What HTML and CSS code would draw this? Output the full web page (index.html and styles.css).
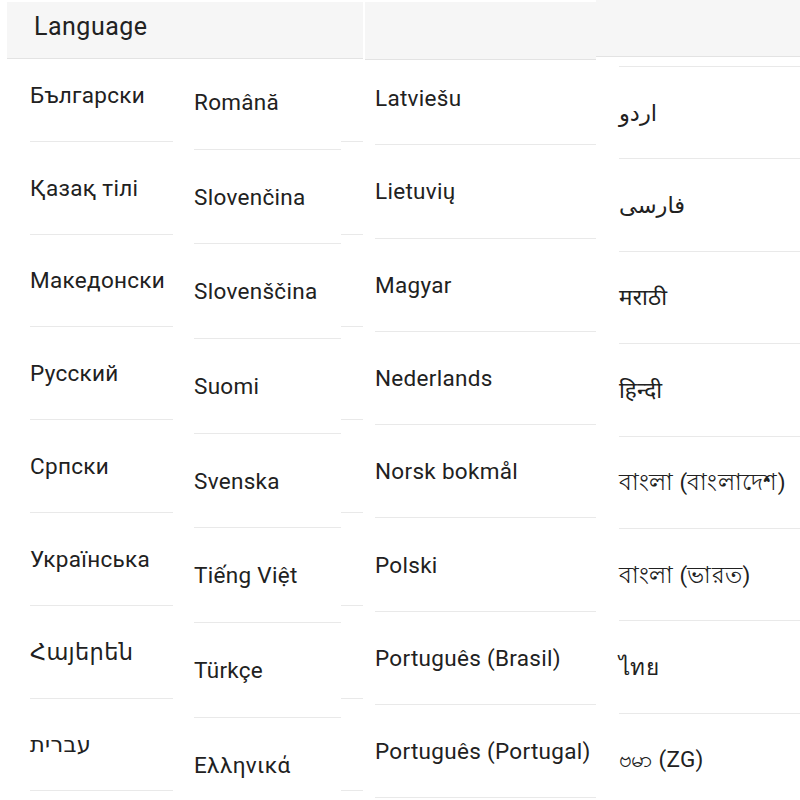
FILE: index.html
```html
<!DOCTYPE html>
<html lang="en">
<head>
<meta charset="utf-8">
<title>Language</title>
<link rel="stylesheet" href="styles.css">
</head>
<body>
<div class="screen">
  <section class="strip strip-a">
    <header class="bar bar-a"><h1 class="title">Language</h1></header>
    <div class="lists">
      <ul class="list list-1">
        <li class="row">Български</li>
        <li class="row">Қазақ тілі</li>
        <li class="row">Македонски</li>
        <li class="row">Русский</li>
        <li class="row">Српски</li>
        <li class="row">Українська</li>
        <li class="row">Հայերեն</li>
        <li class="row">עברית</li>
        <li class="row"></li>
      </ul>
      <ul class="list list-2">
        <li class="row">Română</li>
        <li class="row">Slovenčina</li>
        <li class="row">Slovenščina</li>
        <li class="row">Suomi</li>
        <li class="row">Svenska</li>
        <li class="row">Tiếng Việt</li>
        <li class="row">Türkçe</li>
        <li class="row">Ελληνικά</li>
      </ul>
      <ul class="list list-stub">
        <li class="row"></li>
        <li class="row"></li>
        <li class="row"></li>
        <li class="row"></li>
        <li class="row"></li>
        <li class="row"></li>
        <li class="row"></li>
        <li class="row"></li>
        <li class="row"></li>
      </ul>
    </div>
  </section>
  <section class="strip strip-c">
    <header class="bar bar-c"></header>
    <ul class="list list-3">
      <li class="row">Latviešu</li>
      <li class="row">Lietuvių</li>
      <li class="row">Magyar</li>
      <li class="row">Nederlands</li>
      <li class="row">Norsk bokmål</li>
      <li class="row">Polski</li>
      <li class="row">Português (Brasil)</li>
      <li class="row">Português (Portugal)</li>
      <li class="row"></li>
    </ul>
  </section>
  <section class="strip strip-d">
    <header class="bar bar-d"></header>
    <ul class="list list-4">
      <li class="row">اردو</li>
      <li class="row">فارسی</li>
      <li class="row">मराठी</li>
      <li class="row">हिन्दी</li>
      <li class="row">বাংলা (বাংলাদেশ)</li>
      <li class="row">বাংলা (ভারত)</li>
      <li class="row">ไทย</li>
      <li class="row">ဗမာ (ZG)</li>
    </ul>
  </section>
</div>
</body>
</html>
```
FILE: styles.css
```css
* { box-sizing: border-box; }
html, body {
  margin: 0;
  padding: 0;
  background: #ffffff;
}
body {
  width: 800px;
  height: 800px;
  overflow: hidden;
  font-family: Roboto, "Noto Sans", "DejaVu Sans", sans-serif;
  color: #212121;
}
.screen {
  display: flex;
  align-items: flex-start;
  width: 800px;
  height: 800px;
}
.strip {
  display: flex;
  flex-direction: column;
  flex: none;
}
.strip-a { width: 363px; padding-left: 7px; margin-right: 2px; }
.strip-c { width: 231px; }
.strip-d { width: 204px; }

.bar {
  position: relative;
  z-index: 1;
  background: #f6f6f6;
  border-bottom: 1px solid #e3e3e3;
  flex: none;
}
.bar-a { margin-top: 2px; height: 57px; }
.bar-c { margin-top: 2px; height: 58px; }
.bar-d { margin-top: 0; height: 57px; }

.title {
  margin: 0;
  padding-left: 27px;
  font-size: 25px;
  font-weight: 400;
  letter-spacing: 0.5px;
  line-height: 50px;
  color: #222222;
}

.lists {
  display: flex;
  align-items: flex-start;
}
.list {
  list-style: none;
  margin: 0;
  padding: 0;
  flex: none;
}
.row {
  display: flex;
  align-items: center;
  border-bottom: 1px solid #e9e9e9;
  font-size: 22.5px;
  letter-spacing: 0.3px;
  line-height: 30px;
  white-space: nowrap;
}

.list-1 { width: 143px; margin-left: 23px; margin-top: -10px; }
.list-1 .row { height: 92.8px; }

.list-2 { width: 168px; padding-left: 21px; margin-top: -4px; }
.list-2 .row { height: 94.7px; }

.list-stub { width: 22px; margin-top: -10px; }
.list-stub .row { height: 92.8px; }

.list-3 { margin-left: 10px; width: 221px; margin-top: -8px; }
.list-3 .row { height: 93.3px; }

.list-4 { margin-left: 23px; width: 181px; margin-top: 9px; border-top: 1px solid #e9e9e9; }
.list-4 .row { height: 92.4px; }
```
